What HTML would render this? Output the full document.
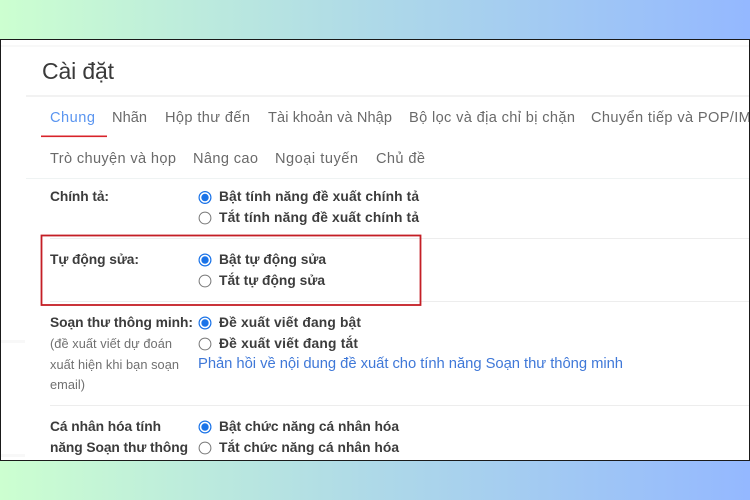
<!DOCTYPE html>
<html lang="vi">
<head>
<meta charset="utf-8">
<style>
html,body{margin:0;padding:0;width:750px;height:500px;overflow:hidden}
body{background:linear-gradient(90deg,#ccffd0 0%,#aed9e8 50%,#94b8ff 100%);position:relative}
svg{position:absolute;left:0;top:0;display:block}
text{font-family:"Liberation Sans","DejaVu Sans",sans-serif}
.t{font-size:14.6px;fill:#6a6a6a}
.b{font-size:13.8px;font-weight:bold;fill:#3c3c3c}
.s{font-size:12.8px;fill:#707070}
.l{fill:#ededed}
.blur{filter:blur(.35px)}
</style>
</head>
<body>
<svg width="750" height="500" viewBox="0 0 750 500">
<defs><clipPath id="c"><rect x="1" y="40" width="748" height="420"/></clipPath></defs>
<rect x="0.5" y="39.5" width="749" height="421" fill="#fff"/>
<g clip-path="url(#c)">
<rect x="1" y="45" width="748" height="2" fill="#f8f8f8"/>
<rect x="26" y="95" width="724" height="2" fill="#f2f2f2"/>
<rect x="26" y="178" width="724" height="1" fill="#eff3f3"/>
<rect x="50" y="238" width="700" height="1" class="l"/>
<rect x="50" y="301" width="700" height="1" class="l"/>
<rect x="50" y="405" width="700" height="1" class="l"/>
<rect x="1" y="340" width="24" height="3" fill="#f8f8f8"/>
<rect x="1" y="454" width="24" height="3" fill="#f8f8f8"/>
<g class="blur">
<text x="42" y="79" font-size="23" fill="#3a3a3a" textLength="72">Cài đặt</text>
<text x="50" y="122" class="t" style="fill:#5a95f0" textLength="45">Chung</text>
<text x="112" y="122" class="t" textLength="35">Nhãn</text>
<text x="165" y="122" class="t" textLength="85">Hộp thư đến</text>
<text x="268" y="122" class="t" textLength="124">Tài khoản và Nhập</text>
<text x="409" y="122" class="t" textLength="166">Bộ lọc và địa chỉ bị chặn</text>
<text x="591" y="122" class="t" textLength="180">Chuyển tiếp và POP/IMAP</text>
<text x="50" y="163" class="t" textLength="126">Trò chuyện và họp</text>
<text x="193" y="163" class="t" textLength="65">Nâng cao</text>
<text x="275" y="163" class="t" textLength="83">Ngoại tuyến</text>
<text x="376" y="163" class="t" textLength="49">Chủ đề</text>

<text x="50" y="201" class="b" textLength="59">Chính tả:</text>
<text x="219" y="201" class="b" textLength="200">Bật tính năng đề xuất chính tả</text>
<text x="219" y="222" class="b" textLength="200">Tắt tính năng đề xuất chính tả</text>

<text x="50" y="264" class="b" textLength="89">Tự động sửa:</text>
<text x="219" y="264" class="b" textLength="107">Bật tự động sửa</text>
<text x="219" y="285" class="b" textLength="106">Tắt tự động sửa</text>

<text x="50" y="327" class="b" textLength="143">Soạn thư thông minh:</text>
<text x="219" y="327" class="b" textLength="142">Đề xuất viết đang bật</text>
<text x="219" y="348" class="b" textLength="139">Đề xuất viết đang tắt</text>
<text x="50" y="348" class="s" textLength="122">(đề xuất viết dự đoán</text>
<text x="50" y="369" class="s" textLength="129">xuất hiện khi bạn soạn</text>
<text x="50" y="389" class="s" textLength="35">email)</text>
<text x="198" y="368" font-size="14.8" fill="#3f78d8" textLength="425">Phản hồi về nội dung đề xuất cho tính năng Soạn thư thông minh</text>

<text x="50" y="431" class="b" textLength="111">Cá nhân hóa tính</text>
<text x="50" y="452" class="b" textLength="138">năng Soạn thư thông</text>
<text x="219" y="431" class="b" textLength="180">Bật chức năng cá nhân hóa</text>
<text x="219" y="452" class="b" textLength="180">Tắt chức năng cá nhân hóa</text>

<g fill="#fff" stroke="#1a73e8" stroke-width="1.2">
<circle cx="205" cy="197.5" r="5.9"/><circle cx="205" cy="260" r="5.9"/><circle cx="205" cy="323" r="5.9"/><circle cx="205" cy="427" r="5.9"/>
</g>
<g fill="#1a73e8">
<circle cx="205" cy="197.5" r="3.7"/><circle cx="205" cy="260" r="3.7"/><circle cx="205" cy="323" r="3.7"/><circle cx="205" cy="427" r="3.7"/>
</g>
<g fill="#fff" stroke="#757575" stroke-width="1">
<circle cx="205" cy="218" r="5.9"/><circle cx="205" cy="281" r="5.9"/><circle cx="205" cy="344" r="5.9"/><circle cx="205" cy="448" r="5.9"/>
</g>
</g>
<rect x="41" y="135.5" width="66" height="1.6" fill="#d8232a"/>
<rect x="41.5" y="235.5" width="379" height="69.5" fill="none" stroke="#c41e25" stroke-width="1.8"/>
</g>
<rect x="0.5" y="39.5" width="749" height="421" fill="none" stroke="#1a1a1a" stroke-width="1"/>
</svg>
</body>
</html>
